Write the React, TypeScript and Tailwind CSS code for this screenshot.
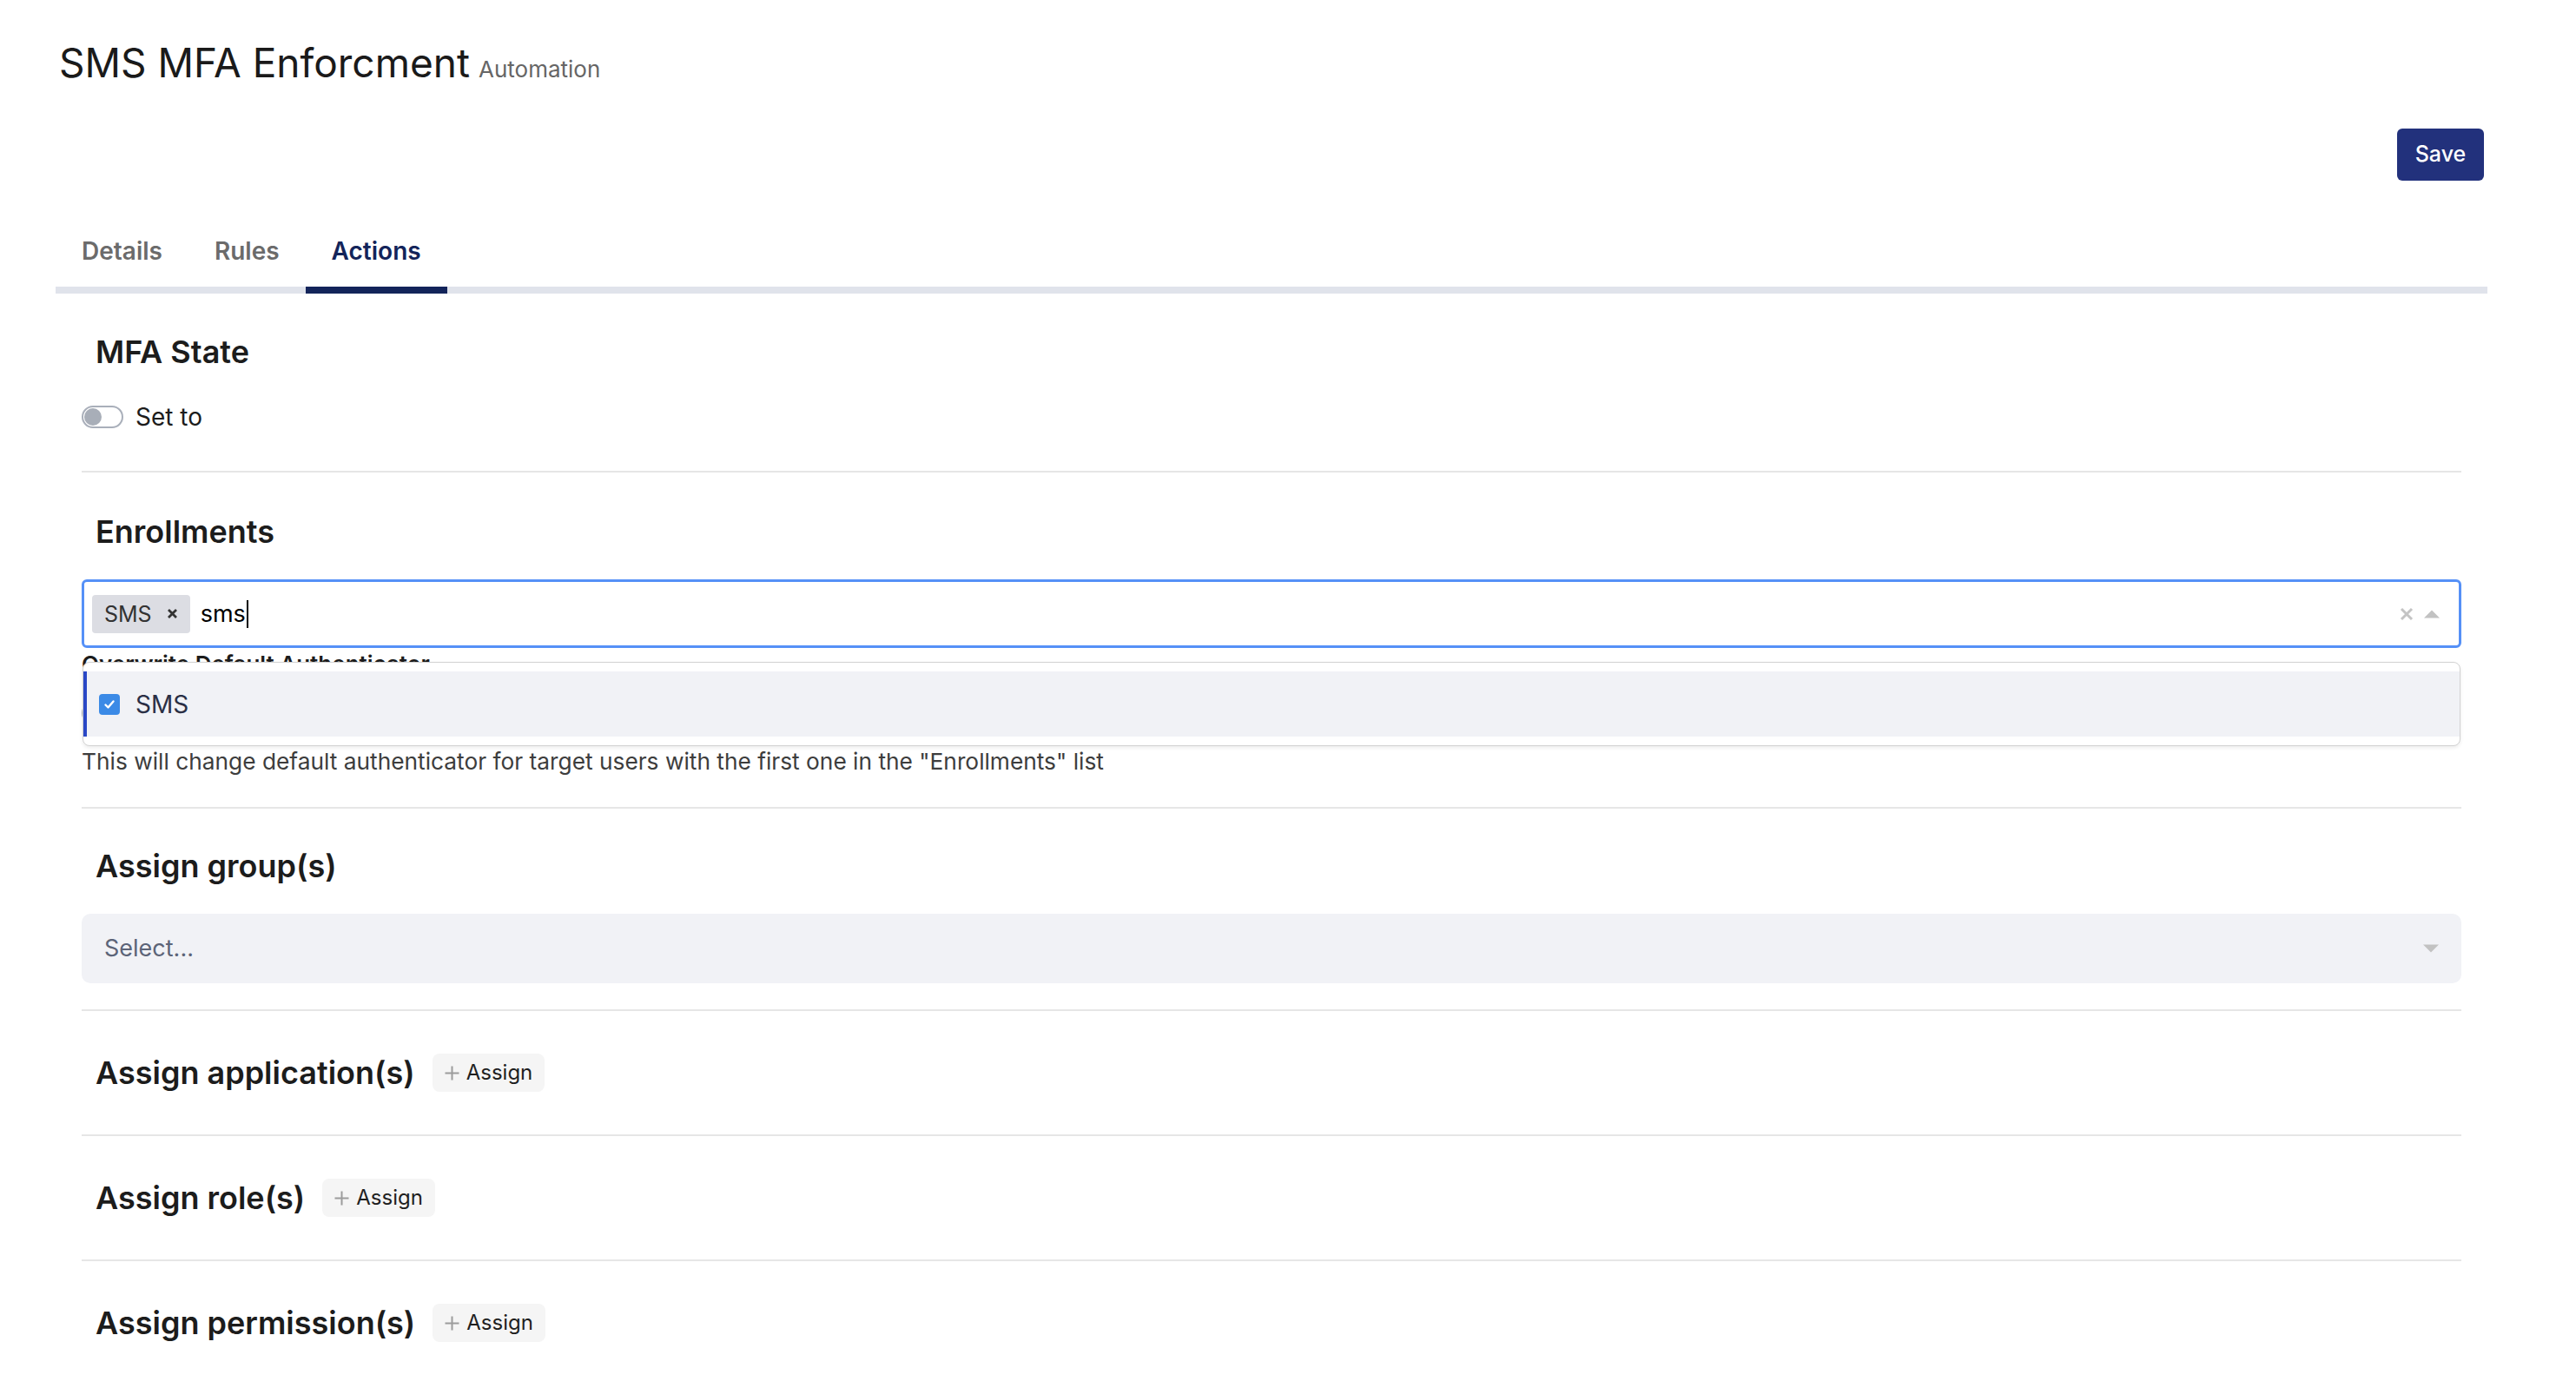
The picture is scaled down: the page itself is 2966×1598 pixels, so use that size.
import React from "react";

function Toggle() {
  return (
    <div className="flex h-[26px] w-[48px] items-center rounded-full border-[2px] border-[#a9afba] bg-white">
      <div className="ml-[1px] h-[20px] w-[20px] rounded-full bg-[#a8aeb8]" />
    </div>
  );
}

function AssignButton() {
  return (
    <button className="flex h-[44px] items-center gap-[7px] rounded-[8px] bg-[#f5f5f5] pl-[13px] pr-[14px] text-[24px] leading-[34px] text-[#1f1f1f]">
      <svg width="19" height="19" viewBox="0 0 19 19">
        <path d="M9.5 1.5v16M1.5 9.5h16" stroke="#9c9c9c" strokeWidth="2" fill="none" />
      </svg>
      <span>Assign</span>
    </button>
  );
}

function AssignSection({ title, last }: { title: string; last?: boolean }) {
  return (
    <>
      <div className="py-[49px]">
        <div className="flex h-[44px] items-center gap-[20px] pl-[16px]">
          <h2 className="text-[36px] font-semibold leading-[44px] text-[#1c1c1c]">{title}</h2>
          <AssignButton />
        </div>
      </div>
      {!last && <div className="h-[2px] bg-[#e6e6e6]" />}
    </>
  );
}

export default function App() {
  return (
    <div className="min-h-[1598px] bg-white font-['Inter',sans-serif] text-[#1c1c1c]">
      <div className="ml-[64px] w-[2800px] pt-[44px]">
        <div className="flex h-[56px] items-baseline pl-[4px]">
          <h1 className="text-[46px] font-normal leading-[56px] text-[#1a1a1a]">SMS MFA Enforcment</h1>
          <span className="ml-[10px] text-[26px] leading-[30px] text-[#666666]">Automation</span>
        </div>

        <div className="mt-[48px] flex justify-end pr-[4px]">
          <button className="h-[60px] w-[100px] rounded-[6px] bg-[#22317c] text-[25px] font-medium text-white">
            Save
          </button>
        </div>

        <div className="mt-[48px] flex border-b-[8px] border-[#e0e3eb]">
          <button className="-mb-[8px] border-b-[8px] border-transparent px-[30px] pb-[21px] pt-[13px] text-[28px] font-semibold leading-[40px] text-[#6b6b6b]">
            Details
          </button>
          <button className="-mb-[8px] border-b-[8px] border-transparent px-[30px] pb-[21px] pt-[13px] text-[28px] font-semibold leading-[40px] text-[#6b6b6b]">
            Rules
          </button>
          <button className="-mb-[8px] border-b-[8px] border-[#13245a] px-[30px] pb-[21px] pt-[13px] text-[28px] font-semibold leading-[40px] text-[#13245a]">
            Actions
          </button>
        </div>

        <div className="px-[30px]">
          {/* MFA State */}
          <div className="pb-[44px] pt-[45px]">
            <h2 className="pl-[16px] text-[36px] font-semibold leading-[44px] text-[#1c1c1c]">MFA State</h2>
            <div className="mt-[35px] flex h-[36px] items-center gap-[14px]">
              <Toggle />
              <span className="text-[28px] leading-[36px] text-[#1c1c1c]">Set to</span>
            </div>
          </div>
          <div className="h-[2px] bg-[#e6e6e6]" />

          {/* Enrollments */}
          <div className="pb-[35px] pt-[46px]">
            <h2 className="pl-[16px] text-[36px] font-semibold leading-[44px] text-[#1c1c1c]">Enrollments</h2>
            <div className="relative mt-[33px]">
              <div className="relative z-10 flex h-[79px] items-center rounded-[6px] border-[3px] border-[#5590f7] bg-white pl-[9px] pr-[22px]">
                <div className="flex h-[44px] items-center rounded-[4px] bg-[#dcdde3] pl-[14px] pr-[14px]">
                  <span className="text-[25px] leading-[34px] text-[#333333]">SMS</span>
                  <svg className="ml-[17px]" width="13" height="13" viewBox="0 0 13 13">
                    <path d="M2 2l9 9M11 2l-9 9" stroke="#333333" strokeWidth="2.8" fill="none" />
                  </svg>
                </div>
                <span className="ml-[12px] text-[27px] leading-[34px] text-black">sms</span>
                <span className="ml-[1px] h-[32px] w-[2px] bg-black" />
                <div className="ml-auto flex items-center gap-[12px]">
                  <svg width="16" height="16" viewBox="0 0 16 16">
                    <path d="M2 2l12 12M14 2L2 14" stroke="#c4c4c4" strokeWidth="3" fill="none" />
                  </svg>
                  <svg width="18" height="10" viewBox="0 0 18 10">
                    <path d="M0 9.5L9 0.5L18 9.5Z" fill="#c2c2c2" />
                  </svg>
                </div>
              </div>

              <div className="mt-[2px] text-[26px] font-semibold leading-[34px] text-[#1c1c1c]">
                Overwrite Default Authenticator
              </div>
              <div className="py-[21px]">
                <div className="flex h-[36px] items-center gap-[14px]">
                  <Toggle />
                  <span className="text-[27px] leading-[36px]">Set to</span>
                </div>
              </div>

              <div className="absolute left-[1px] right-[1px] top-[95px] z-20 rounded-[8px] border border-[#d2d2d2] bg-white py-[10px] shadow-[0_2px_4px_rgba(0,0,0,0.08)]">
                <div className="flex h-[75px] items-center border-l-[4px] border-[#2a48c6] bg-[#f1f2f6] pl-[14px]">
                  <div className="flex h-[24px] w-[24px] items-center justify-center rounded-[4px] bg-[#3b8ae6]">
                    <svg width="16" height="16" viewBox="0 0 16 16">
                      <path d="M3.5 8.5l3 3 6-7" stroke="white" strokeWidth="2.4" fill="none" strokeLinecap="round" strokeLinejoin="round" />
                    </svg>
                  </div>
                  <span className="ml-[18px] text-[28px] leading-[36px] text-[#2a2f45]">SMS</span>
                </div>
              </div>

              <p className="text-[26.3px] leading-[34px] text-[#3d3d3d]">
                This will change default authenticator for target users with the first one in the "Enrollments" list
              </p>
            </div>
          </div>
          <div className="h-[2px] bg-[#e6e6e6]" />

          {/* Assign group(s) */}
          <div className="pb-[30px] pt-[44px]">
            <h2 className="pl-[16px] text-[36px] font-semibold leading-[44px] text-[#1c1c1c]">Assign group(s)</h2>
            <div className="mt-[33px] flex h-[80px] items-center rounded-[10px] bg-[#f1f2f6] pl-[26px] pr-[26px]">
              <span className="text-[27px] leading-[36px] text-[#5c6478]">Select...</span>
              <svg className="ml-auto" width="18" height="10" viewBox="0 0 18 10">
                <path d="M0 0.5L9 9.5L18 0.5Z" fill="#c2c2c2" />
              </svg>
            </div>
          </div>
          <div className="h-[2px] bg-[#e6e6e6]" />

          <AssignSection title="Assign application(s)" />
          <AssignSection title="Assign role(s)" />
          <AssignSection title="Assign permission(s)" last />
        </div>
      </div>
    </div>
  );
}
